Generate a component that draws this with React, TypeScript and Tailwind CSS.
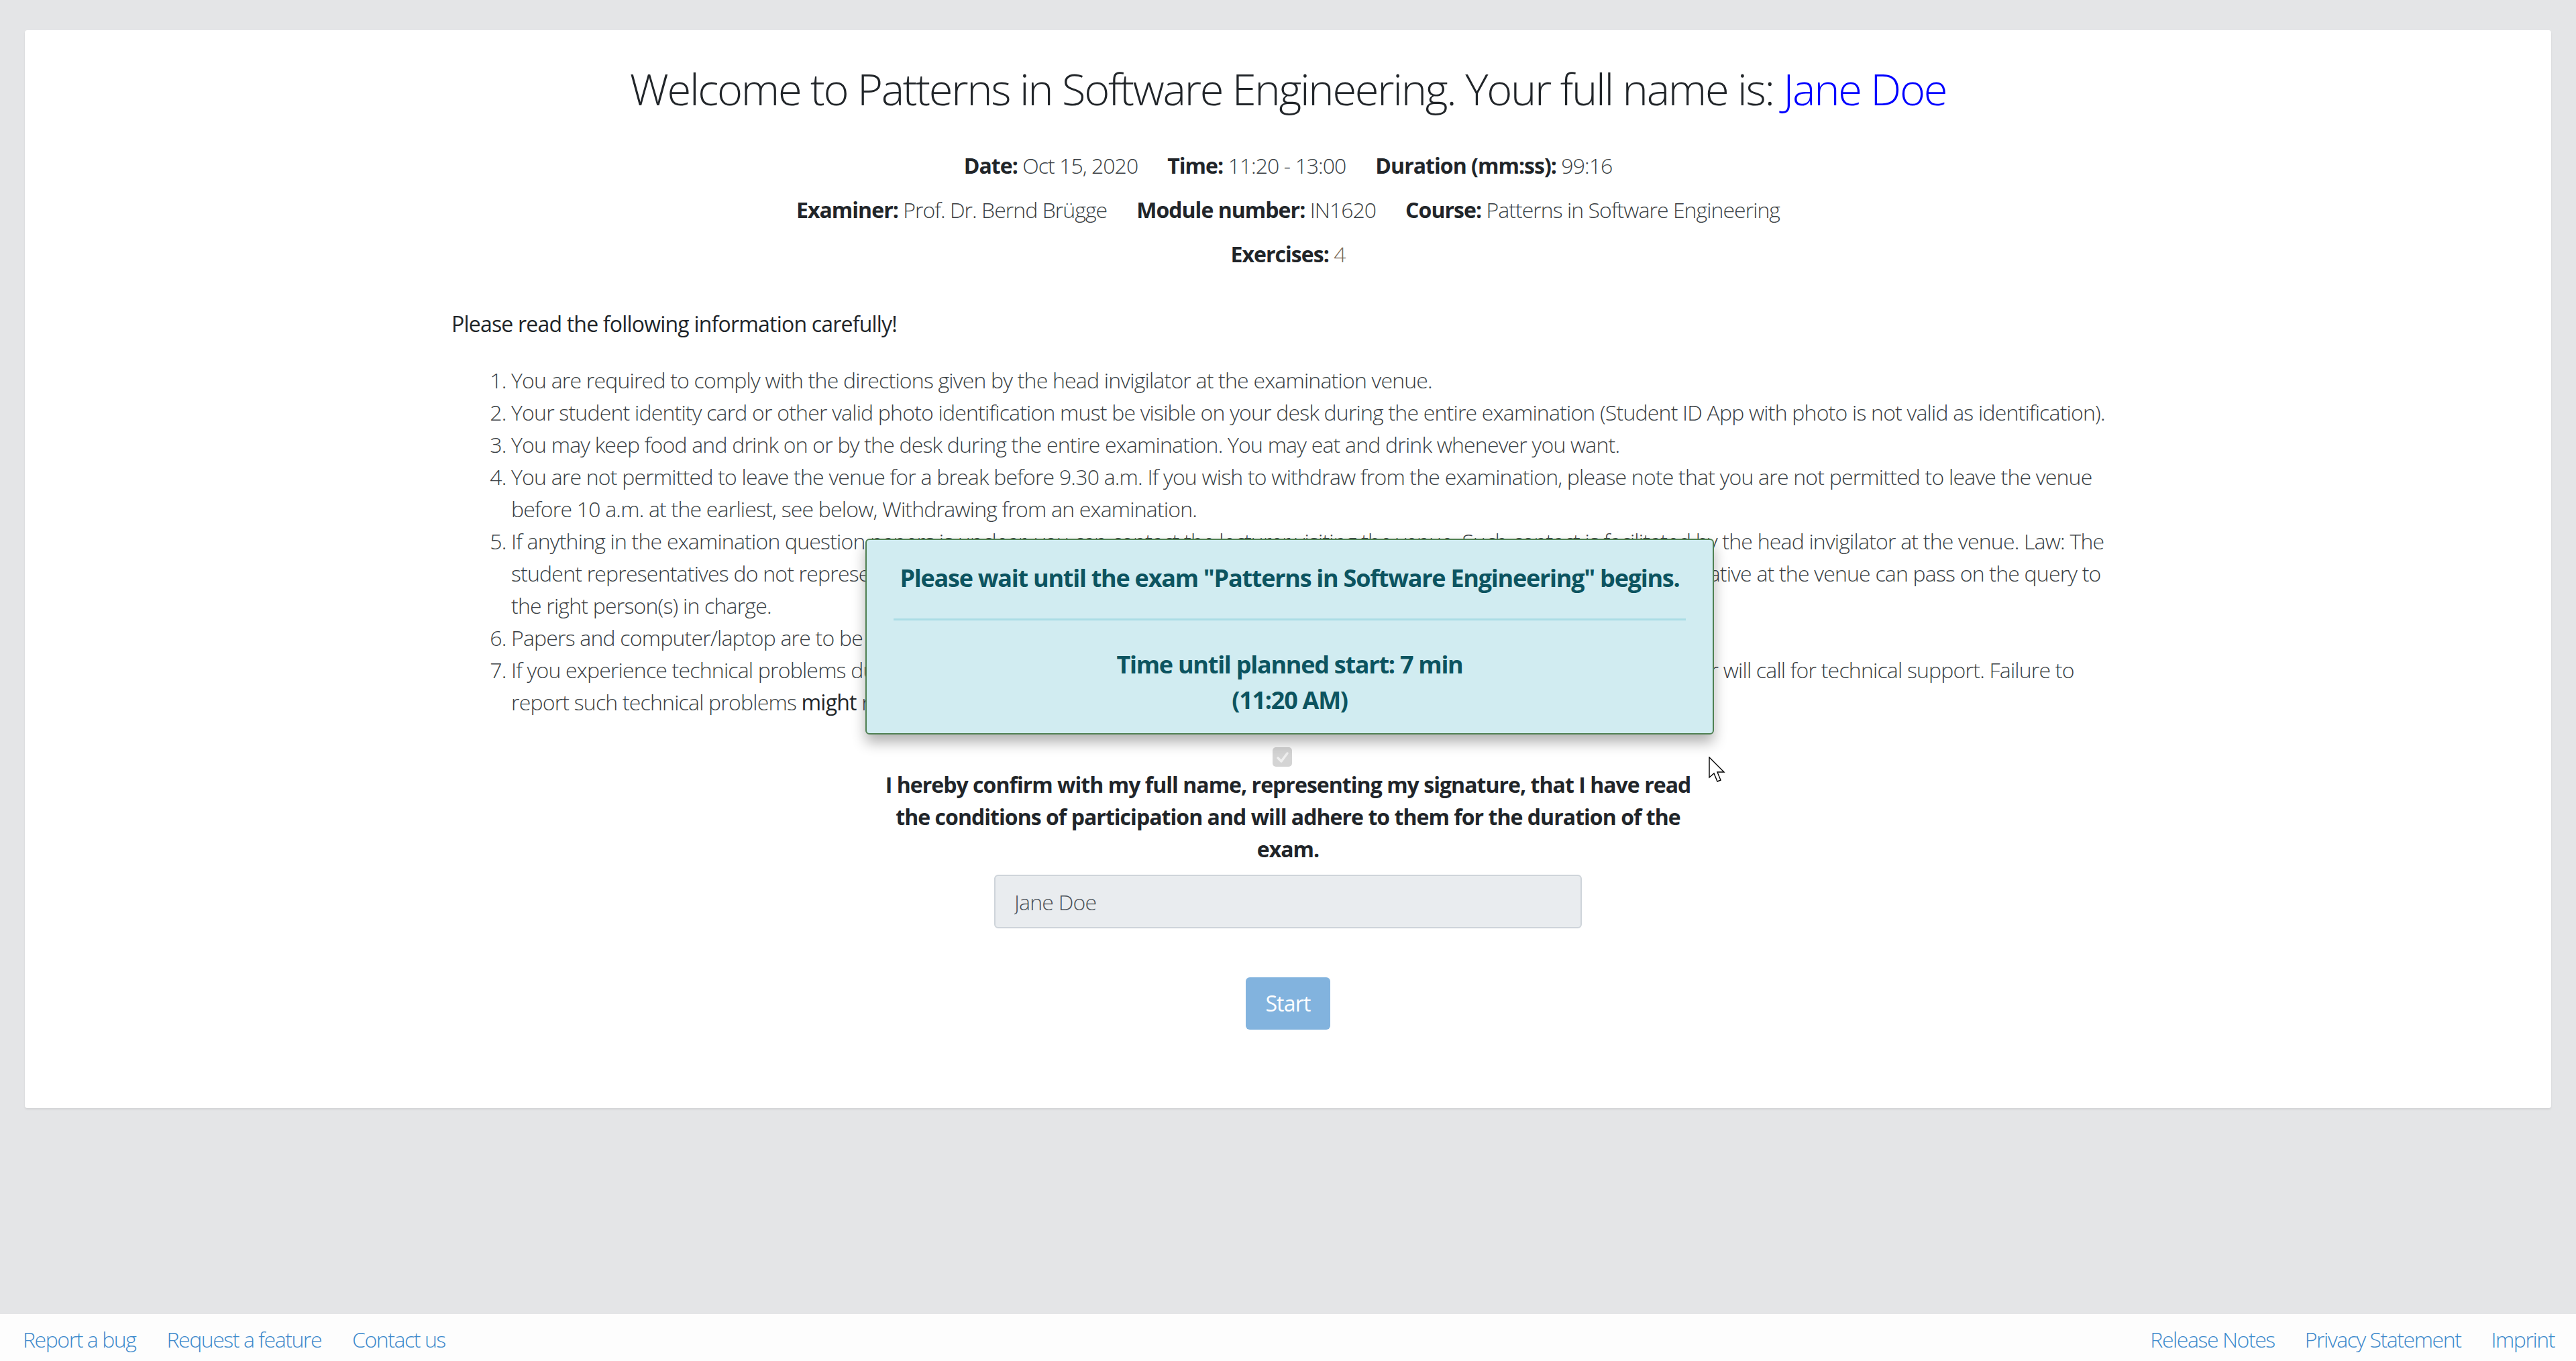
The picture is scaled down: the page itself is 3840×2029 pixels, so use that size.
import React from 'react';

const font = "font-['Open_Sans','Noto_Sans',sans-serif]";

function InfoRow({ items }: { items: { label: string; value: string; color?: string }[] }) {
  return (
    <div className="flex justify-center gap-[44px] leading-[48px] mb-[18px] tracking-[-0.03em]">
      {items.map((item) => (
        <span key={item.label} className="whitespace-nowrap">
          <span className="font-bold text-[#212529]">{item.label}</span>{' '}
          <span className={`font-light ${item.color ?? 'text-[#3a3f44]'}`}>{item.value}</span>
        </span>
      ))}
    </div>
  );
}

function Cursor() {
  return (
    <svg width="28" height="40" viewBox="0 0 28 40" className="absolute left-[2510px] top-[1083px]">
      <path d="M1 1 L1 31 L8 25 L13 37 L18 35 L13 23 L23 23 Z" fill="#fff" stroke="#000" strokeWidth="1.4" strokeLinejoin="miter" />
    </svg>
  );
}

export default function App() {
  return (
    <div className={`${font} min-h-screen bg-[#e4e5e7] flex flex-col text-[32px] text-[#212529] tracking-[-0.025em]`}>
      <main className="flex-1 px-[37px] pt-[45px]">
        <div className="relative bg-white rounded-[4px] shadow-[0_2px_3px_rgba(0,0,0,0.08)] pt-[47px] pb-[117px]">
          <h1 className="text-center text-[65px] leading-[80px] font-light text-[#212529] tracking-[-0.035em]">
            Welcome to Patterns in Software Engineering. Your full name is:{' '}
            <span className="text-[#0000ff]">Jane Doe</span>
          </h1>

          <div className="mt-[51px]">
            <InfoRow
              items={[
                { label: 'Date:', value: 'Oct 15, 2020' },
                { label: 'Time:', value: '11:20 - 13:00' },
                { label: 'Duration (mm:ss):', value: '99:16' },
              ]}
            />
            <InfoRow
              items={[
                { label: 'Examiner:', value: 'Prof. Dr. Bernd Brügge' },
                { label: 'Module number:', value: 'IN1620' },
                { label: 'Course:', value: 'Patterns in Software Engineering' },
              ]}
            />
            <InfoRow items={[{ label: 'Exercises:', value: '4', color: 'text-[#7a6a55]' }]} />
          </div>

          <div className="w-[2494px] mx-auto">
            <p className="mt-[56px] leading-[48px]">Please read the following information carefully!</p>
            <ol className="mt-[36px] list-decimal pl-[89px] font-light leading-[48px] text-[#3a3f44] whitespace-nowrap">
              <li>You are required to comply with the directions given by the head invigilator at the examination venue.</li>
              <li>
                Your student identity card or other valid photo identification must be visible on your desk during the entire examination (Student ID App with photo is not valid as identification).
              </li>
              <li>You may keep food and drink on or by the desk during the entire examination. You may eat and drink whenever you want.</li>
              <li>
                You are not permitted to leave the venue for a break before 9.30 a.m. If you wish to withdraw from the examination, please note that you are not permitted to leave the venue
                <br />
                before 10 a.m. at the earliest, see below, Withdrawing from an examination.
              </li>
              <li>
                If anything in the examination question papers is unclear, you can contact the lecturer visiting the venue. Such contact is facilitated by the head invigilator at the venue. Law: The
                <br />
                student representatives do not represent your interests in the examination room. Only the head invigilator or the student representative at the venue can pass on the query to
                <br />
                the right person(s) in charge.
              </li>
              <li>Papers and computer/laptop are to be placed on the desk during the entire examination.</li>
              <li>
                If you experience technical problems during the examination, please notify an invigilator immediately by raising a hand. The invigilator will call for technical support. Failure to
                <br />
                report such technical problems <span className="font-normal text-[#212529]">might</span> result in a failed attempt.
              </li>
            </ol>
          </div>

          <div className="mt-[43px] flex flex-col items-center">
            <div className="ml-[-17px] w-[29px] h-[29px] rounded-[5px] bg-[#d4d4d4] flex items-center justify-center">
              <svg width="20" height="20" viewBox="0 0 20 20">
                <path d="M3 11 L8 16 L17 4" fill="none" stroke="#efefef" strokeWidth="3.5" strokeLinecap="round" strokeLinejoin="round" />
              </svg>
            </div>
            <p className="mt-[3px] w-[1225px] text-center font-bold leading-[48px] tracking-[-0.03em]">
              I hereby confirm with my full name, representing my signature, that I have read the conditions of participation and will adhere to them for the duration of the exam.
            </p>
            <input
              disabled
              value="Jane Doe"
              readOnly
              className="mt-[14px] w-[876px] h-[80px] px-[28px] bg-[#e9ecef] border-2 border-[#ced4da] rounded-[6px] font-light text-[#495057] text-[32px]"
            />
            <button
              disabled
              className="mt-[73px] w-[126px] h-[78px] rounded-[6px] bg-[#82b3de] text-white font-normal text-[32px]"
            >
              Start
            </button>
          </div>

          <div className="absolute left-[1253px] top-[758px] w-[1265px] h-[292px] bg-[#d1ecf1] border-2 border-[#4f8052] rounded-[6px] shadow-[0_12px_20px_rgba(0,0,0,0.3)] px-[40px] text-[#0c5460] font-bold text-[36px] text-center tracking-[-0.035em] whitespace-nowrap">
            <p className="mt-[30px] leading-[53px]">Please wait until the exam "Patterns in Software Engineering" begins.</p>
            <hr className="mt-[34px] border-0 border-t-[3px] border-[#abdde5]" />
            <p className="mt-[39px] leading-[53px]">
              Time until planned start: 7 min
              <br />
              (11:20 AM)
            </p>
          </div>

          <Cursor />
        </div>
      </main>

      <footer className="h-[70px] bg-[#fdfdfd] flex items-center justify-between pl-[34px] pr-[32px] pt-[6px] font-light text-[#3e8acc] text-[32px] tracking-[-0.045em]">
        <div className="flex gap-[46px]">
          <a>Report a bug</a>
          <a>Request a feature</a>
          <a>Contact us</a>
        </div>
        <div className="flex gap-[45px]">
          <a>Release Notes</a>
          <a>Privacy Statement</a>
          <a>Imprint</a>
        </div>
      </footer>
    </div>
  );
}
